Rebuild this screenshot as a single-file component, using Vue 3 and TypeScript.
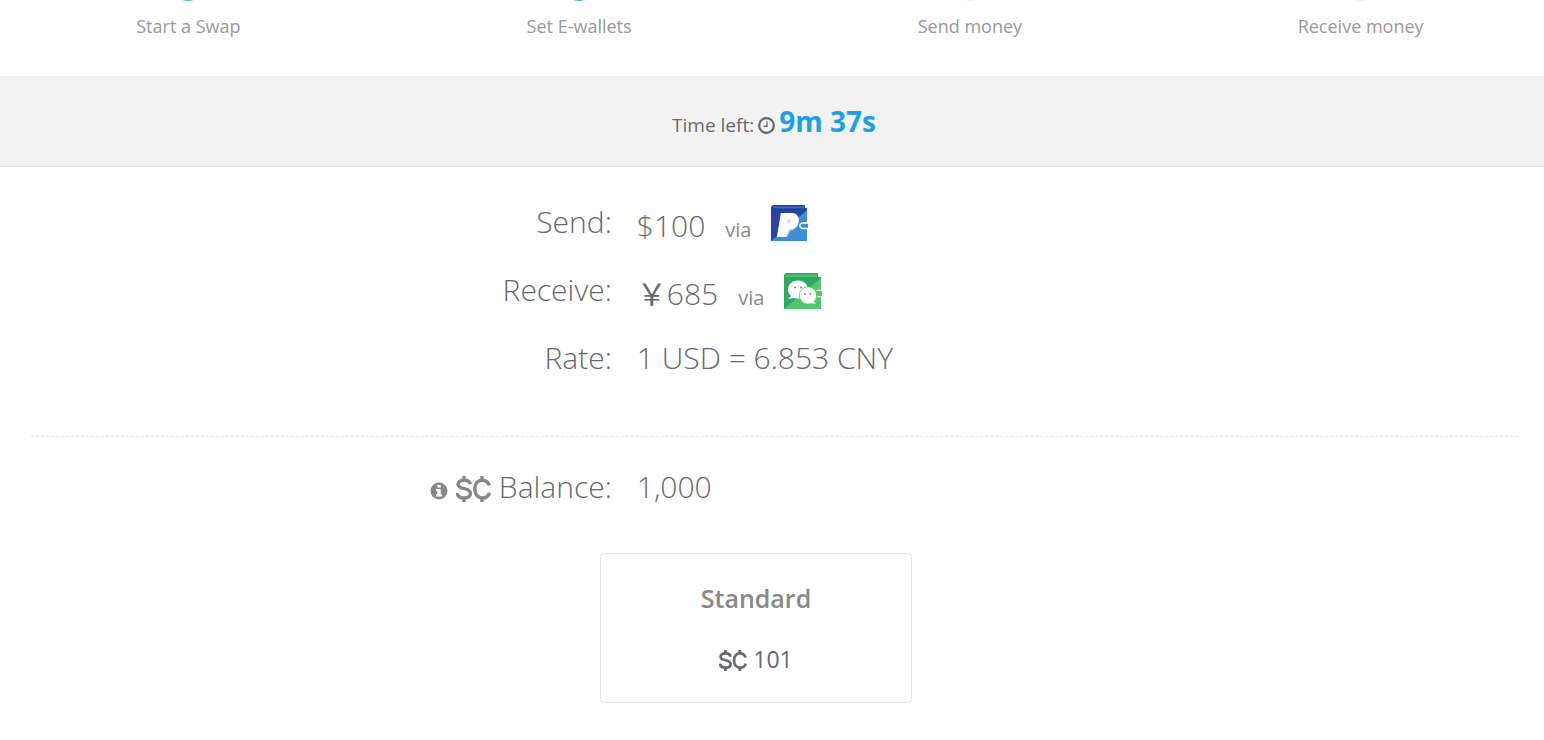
<script setup lang="ts">
interface Step {
  label: string
  done: boolean
}

const steps: Step[] = [
  { label: 'Start a Swap', done: true },
  { label: 'Set E-wallets', done: true },
  { label: 'Send money', done: false },
  { label: 'Receive money', done: false },
]
</script>

<template>
  <main class="page">
    <ol class="steps">
      <li v-for="step in steps" :key="step.label" class="step">
        <span class="dot" :class="{ done: step.done }"></span>
        <span>{{ step.label }}</span>
      </li>
    </ol>

    <section class="timer">
      <span class="timer-label">Time left:</span>
      <svg class="clock" viewBox="0 0 16 16" aria-hidden="true">
        <circle cx="8" cy="8" r="6.9" fill="none" stroke="currentColor" stroke-width="2.1" />
        <path d="M8.5 4v4.7H5.2" fill="none" stroke="currentColor" stroke-width="1.2" />
      </svg>
      <strong class="timer-value">9m 37s</strong>
    </section>

    <section class="details">
      <dl class="rows">
        <div class="row">
          <dt>Send:</dt>
          <dd class="amount">
            <span>$100</span>
            <span class="via">via</span>
            <svg class="wallet" viewBox="0 0 39 37" role="img" aria-label="PayPal">
              <path d="M0 3Q0 0 3 0H34V3H36V36H0Z" fill="#2a43a5" />
              <path d="M36 5V36H0Z" fill="#3b8fd5" />
              <path d="M2 1.7H33V3.5H2Z" fill="#2677c4" />
              <path d="M1 4.2H34" stroke="#20368e" stroke-width=".8" />
              <path d="M10 8H21Q29 9 28 17Q26 25 19 26L16 32H6Z" fill="#b9cceb" />
              <path d="M10 8H20Q28 8 27.500 16Q26 24.500 18 24.500L15 32H6Z" fill="#fff" />
              <path d="M17 14H19Q21 15 20 17Q18 19 16 18Z" fill="#d5e0f3" />
              <path d="M37 18H31Q26.500 20.500 31 23.500H37" fill="#3b8fd5" stroke="#fff" stroke-width="1.400" />
            </svg>
          </dd>
        </div>
        <div class="row">
          <dt>Receive:</dt>
          <dd class="amount">
            <span><span class="yen">&#xFFE5;</span>685</span>
            <span class="via">via</span>
            <svg class="wallet" viewBox="0 0 39 37" role="img" aria-label="WeChat">
              <path d="M0 3Q0 0 3 0H34V4H37V36H0Z" fill="#2fa862" />
              <path d="M37 5V36H0Z" fill="#52c66f" />
              <path d="M2 1.500H33V4H2Z" fill="#4bc173" />
              <path d="M14 7.500C8 7.500 4 11.500 4 16.500C4 20 6 22 7 23L4 26L10 25C18 27 24 23 24 16.500C24 11.500 20 7.500 14 7.500Z" fill="#fff" />
              <circle cx="24" cy="22.500" r="8.700" fill="#fff" stroke="#49bc6c" stroke-width=".8" />
              <path d="M29 28L32 31L26 30Z" fill="#fff" />
              <g fill="#39a363">
                <circle cx="11" cy="14.500" r="1" />
                <circle cx="17" cy="14.500" r="1" />
                <circle cx="21" cy="21" r=".9" />
                <circle cx="26.500" cy="21" r=".9" />
              </g>
              <path d="M38 17.500H32.500M33 23.500H38" stroke="#fff" stroke-width="1.300" />
              <path d="M32.500 18.200H38V22.800H32.500Z" fill="#52c66f" />
            </svg>
          </dd>
        </div>
        <div class="row">
          <dt>Rate:</dt>
          <dd>1 USD = 6.853 CNY</dd>
        </div>
      </dl>

      <hr class="divider" />

      <dl class="rows">
        <div class="row">
          <dt>
            <svg class="info" viewBox="0 0 18 18" aria-hidden="true">
              <circle cx="9" cy="9" r="8.500" fill="currentColor" />
              <path d="M7.500 3H10.700V5.500H7.500ZM6 7H10.700V12.500H12V14.500H6V12.500H7.300V9H6Z" fill="#fff" />
            </svg>
            <svg class="coin" viewBox="0 0 35 26" role="img" aria-label="Swap coins">
              <g fill="none" stroke="currentColor" stroke-width="3.400">
                <path d="M14.300 8.300C14 5.500 11.500 4.200 8 4.200C4.300 4.200 2 5.800 2 8.300C2 11 4.200 11.900 8 12.700C12 13.500 14.500 14.600 14.500 17.600C14.500 20.300 12 22 8.200 22C4 22 1.500 20 1.300 17" />
                <path d="M33.300 9.300C32 6 29.500 4.200 26.500 4.200C21.500 4.200 18.800 7.900 18.800 13.100C18.800 18.300 21.500 22 26.500 22C30 22 32.500 20 33.500 16.800" />
                <path d="M8 0V4M8 22V26M26 0V4M26 22V26" />
              </g>
            </svg>
            <span>Balance:</span>
          </dt>
          <dd>1,000</dd>
        </div>
      </dl>

      <div class="plans">
        <button type="button" class="plan">
          <span class="plan-name">Standard</span>
          <span class="plan-price">
            <svg class="coin small" viewBox="0 0 35 26" role="img" aria-label="Swap coins">
              <g fill="none" stroke="currentColor" stroke-width="3.400">
                <path d="M14.300 8.300C14 5.500 11.500 4.200 8 4.200C4.300 4.200 2 5.800 2 8.300C2 11 4.200 11.900 8 12.700C12 13.500 14.500 14.600 14.500 17.600C14.500 20.300 12 22 8.200 22C4 22 1.500 20 1.300 17" />
                <path d="M33.300 9.300C32 6 29.500 4.200 26.500 4.200C21.500 4.200 18.800 7.900 18.800 13.100C18.800 18.300 21.500 22 26.500 22C30 22 32.500 20 33.500 16.800" />
                <path d="M8 0V4M8 22V26M26 0V4M26 22V26" />
              </g>
            </svg>
            <span>101</span>
          </span>
        </button>
      </div>
    </section>
  </main>
</template>

<style>
body {
  margin: 0;
  background: #fff;
}
</style>

<style scoped>
.page {
  overflow: hidden;
  font-family: "Open Sans", "Noto Sans CJK SC", sans-serif;
  color: #666a6d;
}
.steps {
  display: grid;
  grid-template-columns: repeat(4, 1fr);
  margin: 0 -12px 0 -7px;
  padding: 0 0 37px;
  list-style: none;
}
.step {
  display: flex;
  flex-direction: column;
  align-items: center;
  gap: 12px;
  font-size: 18px;
  line-height: 26px;
  color: #999;
}
.dot {
  width: 30px;
  height: 30px;
  margin-top: -29px;
  border-radius: 50%;
  background: #eee;
}
.dot.done {
  background: #44b3ea;
}
.timer {
  display: flex;
  justify-content: center;
  align-items: baseline;
  gap: 4px;
  padding: 23px 0 19px 4px;
  background: #f2f2f2;
  border-bottom: 1px solid #e6e6e6;
  line-height: 44px;
}
.timer-label {
  font-size: 19px;
}
.clock {
  width: 17px;
  height: 17px;
  align-self: center;
  margin-top: 4px;
}
.timer-value {
  font-size: 28px;
  font-weight: 700;
  color: #1ba1e2;
}
.details {
  padding: 33px 26px 37px 31px;
}
.rows {
  display: grid;
  gap: 24px;
  margin: 0;
  font-size: 30px;
  font-weight: 300;
  line-height: 44px;
}
.row {
  display: grid;
  grid-template-columns: 2fr 3fr;
}
dt {
  display: flex;
  justify-content: flex-end;
  align-items: center;
  gap: 8px;
  padding-right: 14px;
}
dd {
  margin: 0;
  padding-left: 11px;
}
.amount {
  display: flex;
  align-items: baseline;
  gap: 20px;
  padding-top: 4px;
  margin-bottom: -4px;
}
.yen {
  font-weight: 400;
}
.via {
  font-size: 20px;
  font-weight: 400;
  line-height: 20px;
  color: #888;
}
.wallet {
  width: 39px;
  height: 37px;
  align-self: flex-start;
  margin-top: 1px;
}
.divider {
  margin: 56px 0 28px;
  border: 0;
  border-top: 1px dashed #e6e6e6;
}
.info {
  width: 18px;
  height: 18px;
  margin-top: 8px;
  color: #888;
}
.coin {
  width: 35px;
  height: 26px;
  margin-top: 3px;
  color: #888;
}
.coin.small {
  width: 28px;
  height: 21px;
  color: #666a6d;
}
.plans {
  display: flex;
  justify-content: center;
  margin-top: 44px;
  padding-right: 37px;
}
.plan {
  display: flex;
  flex-direction: column;
  align-items: center;
  gap: 25px;
  width: 312px;
  padding: 26px 16px 25px;
  border: 1px solid #e6e6e6;
  border-radius: 4px;
  background: #fff;
  font-family: inherit;
  color: #666a6d;
  cursor: pointer;
}
.plan-name {
  font-size: 25px;
  font-weight: 600;
  line-height: 36px;
  color: #888;
}
.plan-price {
  display: flex;
  align-items: center;
  gap: 6px;
  font-size: 23px;
  line-height: 36px;
}
</style>
